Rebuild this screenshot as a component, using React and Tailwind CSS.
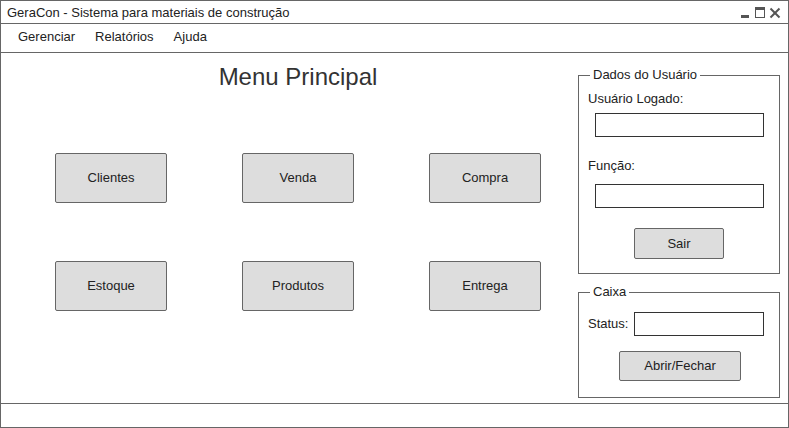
import React from "react";

const F = { fontFamily: '"Liberation Sans", Arial, sans-serif' };

function Btn({ children, className = "" }) {
  return (
    <div
      className={
        "flex items-center justify-center rounded-[2px] border border-[#666] bg-[#dddddd] text-[13px] text-[#222] " +
        className
      }
    >
      {children}
    </div>
  );
}

export default function App() {
  const labels = ["Clientes", "Venda", "Compra", "Estoque", "Produtos", "Entrega"];
  return (
    <div
      style={F}
      className="flex h-[428px] w-[789px] flex-col border border-[#666] bg-white text-[#222]"
    >
      <div className="flex h-[23px] shrink-0 items-start justify-between border-b border-[#666] pl-[6px] pr-[7px] pt-[2px]">
        <span className="text-[13px] leading-[20px]">
          GeraCon - Sistema para materiais de construção
        </span>
        <svg width="40" height="12" viewBox="0 0 40 12" className="mt-[4px]">
          <rect x="0" y="8" width="8" height="3" fill="#555" />
          <rect x="14.5" y="0.5" width="9" height="10" fill="none" stroke="#555" />
          <rect x="14" y="0" width="10" height="3" fill="#555" />
          <line x1="29.5" y1="1.5" x2="38.5" y2="10.5" stroke="#555" strokeWidth="2" />
          <line x1="38.5" y1="1.5" x2="29.5" y2="10.5" stroke="#555" strokeWidth="2" />
        </svg>
      </div>
      <div className="flex h-[29px] shrink-0 items-start gap-[20px] border-b border-[#666] pl-[17px] pt-[3px] text-[13px] leading-[20px]">
        <span>Gerenciar</span>
        <span>Relatórios</span>
        <span>Ajuda</span>
      </div>
      <div className="flex flex-1">
        <div className="flex-1 pl-[54px] pt-[10px]">
          <div className="w-[486px] text-center text-[24px] leading-[28px] text-[#333]">
            Menu Principal
          </div>
          <div className="mt-[62px] grid grid-cols-[112px_112px_112px] auto-rows-[50px] gap-x-[75px] gap-y-[58px]">
            {labels.map((l) => (
              <Btn key={l}>{l}</Btn>
            ))}
          </div>
        </div>
        <div className="mr-[8px] w-[202px] pt-[14px]">
          <fieldset className="border border-[#666] pb-[14px]">
            <legend className="ml-[11px] px-[3px] text-[13px] leading-[16px]">Dados do Usuário</legend>
            <div className="ml-[9px] mt-[8px] text-[13px] leading-[16px]">Usuário Logado:</div>
            <div className="ml-[16px] mr-[15px] mt-[6px] h-[24px] border border-[#333]" />
            <div className="ml-[9px] mt-[21px] text-[13px] leading-[16px]">Função:</div>
            <div className="ml-[16px] mr-[15px] mt-[10px] h-[24px] border border-[#333]" />
            <Btn className="ml-[55px] mt-[20px] h-[31px] w-[90px]">Sair</Btn>
          </fieldset>
          <fieldset className="mt-[10px] border border-[#666] pb-[16px]">
            <legend className="ml-[11px] px-[3px] text-[13px] leading-[16px]">Caixa</legend>
            <div className="mt-[12px] flex items-center pl-[9px]">
              <span className="text-[13px] leading-[16px]">Status:</span>
              <div className="ml-[6px] h-[24px] w-[130px] border border-[#333]" />
            </div>
            <Btn className="ml-[40px] mt-[15px] h-[30px] w-[122px]">Abrir/Fechar</Btn>
          </fieldset>
        </div>
      </div>
      <div className="h-[24px] shrink-0 border-t border-[#666]" />
    </div>
  );
}
